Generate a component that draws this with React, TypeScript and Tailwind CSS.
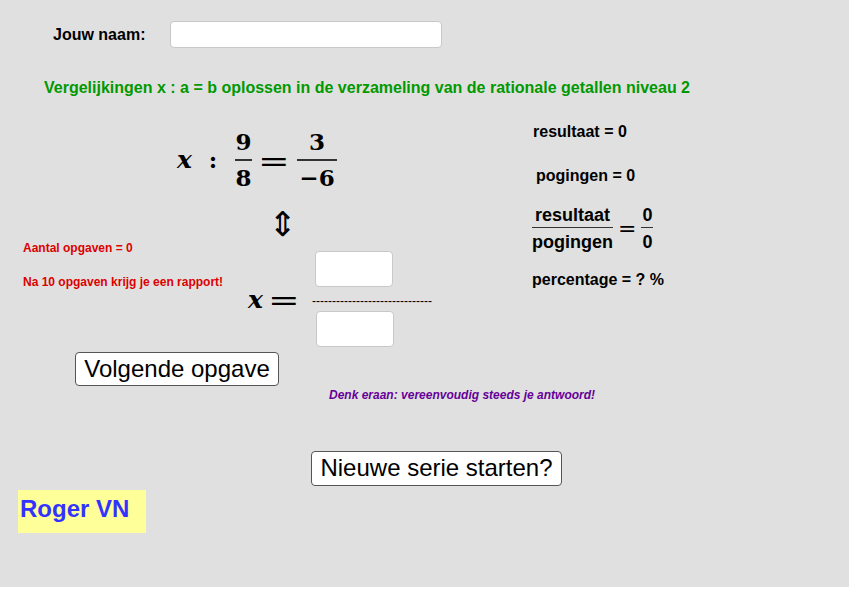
import React from "react";

const MATH = "font-['DejaVu_Serif',serif] font-bold text-[23px] leading-[23px]";
const MX = "font-['DejaVu_Serif',serif] font-bold italic text-[25px] leading-[25px]";
const EQ = "inline-block scale-x-[1.35] font-['DejaVu_Serif',serif] text-[28px] leading-[28px]";

function Frac({ num, den, w }: { num: string; den: string; w: string }) {
  return (
    <div className={`flex flex-col items-center ${w}`}>
      <div className={MATH}>{num}</div>
      <div className="self-stretch h-[1.5px] bg-[#333] mt-[6px]" />
      <div className={`${MATH} mt-[5px]`}>{den}</div>
    </div>
  );
}

export default function App() {
  return (
    <div className="w-[852px] h-[589px] bg-white">
      <div className="w-[849px] h-[587px] bg-[#e0e0e0] flex flex-col text-black font-['Liberation_Sans',Arial,sans-serif]">
        {/* name row */}
        <div className="flex items-center pl-[53px] pt-[21px]">
          <span className="text-[16px] leading-[18px] font-bold">Jouw naam:</span>
          <input
            className="ml-[25px] w-[272px] h-[27px] bg-white border border-[#c8c8c8] rounded-[4px] outline-none"
            defaultValue=""
          />
        </div>

        {/* title */}
        <div className="mt-[31px] pl-[44px] text-[16px] leading-[18px] font-bold text-[#009900]">
          Vergelijkingen x : a = b oplossen in de verzameling van de rationale getallen niveau 2
        </div>

        {/* main section */}
        <div className="flex">
          <div className="w-[532px] flex flex-col">
            {/* equation */}
            <div className="mt-[33px] h-[59px] flex items-center">
              <div className={`ml-[174px] w-[21px] flex justify-center ${MX}`}>x</div>
              <div className={`ml-[13px] w-[10px] flex justify-center ${MATH}`}>:</div>
              <div className="ml-[17px]">
                <Frac num="9" den="8" w="w-[17px]" />
              </div>
              <div className="ml-[11px] w-[22px] flex justify-center mt-[4px]">
                <span className={EQ}>=</span>
              </div>
              <div className="ml-[12px]">
                <Frac num="3" den="−6" w="w-[40px]" />
              </div>
            </div>
            {/* arrow */}
            <div className="h-[48px] pt-[21px] flex items-center">
              <div className="ml-[270px] w-[25px] flex justify-center font-['DejaVu_Sans',sans-serif] text-[34px] leading-[34px]">
                ⇕
              </div>
            </div>
            {/* red texts + x = fraction */}
            <div className="flex">
              <div className="w-[245px] flex flex-col pl-[23px] text-[12px] leading-[14px] font-bold text-[#dc0000]">
                <div className="mt-[3.5px]">Aantal opgaven = 0</div>
                <div className="mt-[20px]">Na 10 opgaven krijg je een rapport!</div>
              </div>
              <div className="flex items-center pt-[14px]">
                <div className={`w-[21px] flex justify-center ${MX}`}>x</div>
                <div className="ml-[7px] w-[22px] flex justify-center mt-[4px]">
                  <span className={EQ}>=</span>
                </div>
                <div className="ml-[17px] flex flex-col">
                  <div className="ml-[3px] w-[78px] h-[36px] bg-white border border-[#c8c8c8] rounded-[4px]" />
                  <div className="h-[24px] pt-[8px] text-[12px] leading-[12px] whitespace-nowrap">
                    ------------------------------
                  </div>
                  <div className="ml-[4px] w-[78px] h-[36px] bg-white border border-[#c8c8c8] rounded-[4px]" />
                </div>
              </div>
            </div>
          </div>

          {/* right column */}
          <div className="flex flex-col text-[16px] leading-[18px] font-bold">
            <div className="mt-[26px] pl-[1px]">resultaat = 0</div>
            <div className="mt-[26px] pl-[4px]">pogingen = 0</div>
            <div className="mt-[21px] flex items-center">
              <div className="flex flex-col items-center text-[18px] leading-[18px]">
                <div>resultaat</div>
                <div className="self-stretch h-[1px] bg-[#333] mt-[3px]" />
                <div className="mt-[5px]">pogingen</div>
              </div>
              <span className="ml-[5px] font-['DejaVu_Sans',sans-serif] font-normal text-[22px] leading-[22px]">=</span>
              <div className="ml-[5px] flex flex-col items-center text-[18px] leading-[18px]">
                <div className="px-[1px]">0</div>
                <div className="self-stretch h-[1px] bg-[#333] mt-[3px]" />
                <div className="px-[1px] mt-[5px]">0</div>
              </div>
            </div>
            <div className="mt-[20px]">percentage = ? %</div>
          </div>
        </div>

        {/* Volgende opgave */}
        <button className="self-start ml-[75px] mt-[5px] w-[204px] h-[34px] bg-white border border-[#555] rounded-[4px] text-[24px] leading-[24px] flex items-center justify-center pb-[1px]">
          Volgende opgave
        </button>

        {/* purple note */}
        <div className="mt-[2px] pl-[329px] text-[12px] leading-[14px] font-bold italic text-[#660099]">
          Denk eraan: vereenvoudig steeds je antwoord!
        </div>

        {/* Nieuwe serie */}
        <button className="self-start ml-[311px] mt-[49px] w-[251px] h-[35px] bg-white border border-[#555] rounded-[4px] text-[24px] leading-[24px] flex items-center justify-center pb-[1px]">
          Nieuwe serie starten?
        </button>

        {/* Roger VN */}
        <div className="self-start ml-[18px] mt-[4px] w-[128px] h-[43px] bg-[#ffff99] pl-[2px] pt-[7px] text-[24px] leading-[24px] font-bold text-[#3333ff]">
          Roger VN
        </div>
      </div>
    </div>
  );
}
